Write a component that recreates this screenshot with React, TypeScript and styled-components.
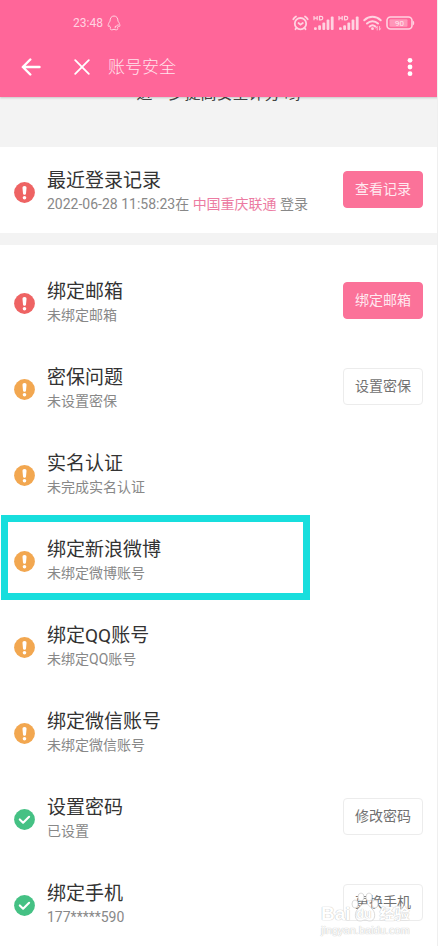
import React from "react";
import styled, { createGlobalStyle } from "styled-components";

const GlobalStyle = createGlobalStyle`
  *, *::before, *::after { box-sizing: border-box; }
  html, body { margin: 0; padding: 0; background: #fdfdfd; }
  body, button {
    font-family: Roboto, "Noto Sans CJK SC", sans-serif;
  }
`;

const Page = styled.div`
  position: relative;
  min-height: 100vh;
  overflow: hidden;
  background: #ffffff;
  border-right: 1px solid #efefef;
`;

const Header = styled.header`
  position: relative;
  background: #ff6699;
  color: #ffffff;
  margin-right: -1px;
  padding-bottom: 10px;
  box-shadow: 0 1px 2px rgba(0, 0, 0, 0.18);
`;

const StatusBar = styled.div`
  display: flex;
  align-items: center;
  justify-content: space-between;
  height: 46px;
  padding: 0 23px 0 73px;
  color: #ffd3e1;
`;

const StatusGroup = styled.div<{ $gap: number }>`
  display: flex;
  align-items: center;
  gap: ${(p) => p.$gap}px;
`;

const Clock = styled.time`
  font-size: 12px;
  line-height: 16px;
`;

const Toolbar = styled.div`
  display: flex;
  align-items: center;
  height: 41px;
  padding: 0 16px 0 19px;
`;

const IconButton = styled.button`
  display: flex;
  align-items: center;
  justify-content: center;
  width: 24px;
  height: 32px;
  padding: 0;
  border: 0;
  background: transparent;
  color: inherit;
  cursor: pointer;
`;

const CloseButton = styled(IconButton)`
  margin-left: 27px;
`;

const PageTitle = styled.h1`
  flex: 1;
  margin: 0 0 0 14px;
  font-size: 17px;
  line-height: 24px;
  font-weight: 300;
  color: #ffe3ec;
`;

const Banner = styled.section`
  height: 50px;
  overflow: hidden;
  display: flex;
  flex-direction: column;
  background: #f3f3f3;
`;

const BannerText = styled.p`
  margin: -15px 0 0;
  font-size: 16px;
  line-height: 24px;
  color: #444444;
  text-align: center;
`;

const Divider = styled.div`
  height: 12px;
  background: #f3f3f3;
`;

const List = styled.ul<{ $inset?: boolean }>`
  list-style: none;
  margin: 0;
  padding: ${(p) => (p.$inset ? "13px 0 0" : "0")};
`;

const Row = styled.li`
  position: relative;
  display: flex;
  align-items: flex-start;
  min-height: 86px;
  padding: 22px 14px 18px 14px;
`;

const StatusIcon = styled.svg`
  flex: none;
  width: 21px;
  height: 21px;
  margin-top: 13px;
`;

const RowText = styled.div`
  flex: 1;
  min-width: 0;
  margin-left: 12px;
`;

const RowTitle = styled.h2`
  margin: 0;
  font-size: 19px;
  line-height: 24px;
  font-weight: 400;
  color: #333333;
`;

const RowNote = styled.p`
  margin: 0;
  font-size: 14px;
  line-height: 22px;
  color: #888888;
  white-space: nowrap;
`;

const Place = styled.span`
  color: #ec7ba2;
`;

const ActionButton = styled.button<{ $primary?: boolean }>`
  flex: none;
  height: 37px;
  width: 80px;
  margin-top: 2px;
  padding: 0 0 2px;
  border: 1px solid ${(p) => (p.$primary ? "#fb7299" : "#ececec")};
  border-radius: 4px;
  background: ${(p) => (p.$primary ? "#fb7299" : "#ffffff")};
  color: ${(p) => (p.$primary ? "#ffe9f0" : "#717171")};
  font-size: 14px;
  line-height: 20px;
  cursor: pointer;
`;

const Highlight = styled.div`
  position: absolute;
  top: -1px;
  left: 1px;
  width: 309px;
  height: 85px;
  border: 7px solid #18dedd;
  pointer-events: none;
`;

const Watermark = styled.div`
  position: absolute;
  right: 22px;
  bottom: 10px;
  width: 94px;
  font-family: "Liberation Sans", "Noto Sans CJK SC", sans-serif;
  color: #ffffff;
  text-shadow: 0 0 1px #c4c4c4, 0 0 1px #c4c4c4;
  white-space: nowrap;
  pointer-events: none;
`;

const WatermarkBrand = styled.div`
  display: flex;
  align-items: center;
  font-size: 19px;
  line-height: 20px;
  font-weight: 700;
`;

const WatermarkName = styled.span`
  margin-left: 1px;
  font-size: 15px;
`;

const WatermarkUrl = styled.div`
  font-size: 11px;
  line-height: 12px;
`;

const Paw = styled.svg`
  position: absolute;
  left: 30px;
  top: -12px;
  width: 28px;
  height: 32px;
`;

const PawLabel = styled.span`
  position: relative;
  width: 28px;
  font-size: 12px;
  padding-left: 6px;
`;

type Level = "danger" | "warn" | "ok";

const levelColor: Record<Level, string> = {
  danger: "#ee6363",
  warn: "#f2a750",
  ok: "#45c184",
};

function LevelIcon({ level }: { level: Level }) {
  return (
    <StatusIcon viewBox="0 0 21 21" aria-hidden="true">
      <circle cx="10.5" cy="10.5" r="10.4" fill={levelColor[level]} />
      {level === "ok" ? (
        <path d="M5.8 10.4l3.3 3.3 6-5.9" fill="none" stroke="#fff" strokeWidth="2.1" strokeLinecap="round" strokeLinejoin="round" />
      ) : (
        <>
          <path d="M10.5 4.1c1.400 0 2.100.8 2 2l-.5 5.400c-.1.9-.7 1.300-1.500 1.300s-1.400-.4-1.500-1.300l-.5-5.400c-.1-1.200.6-2 2-2z" fill="#fff" />
          <circle cx="10.5" cy="15.7" r="1.800" fill="#fff" />
        </>
      )}
    </StatusIcon>
  );
}

function Penguin() {
  return (
    <svg width="14" height="16" viewBox="0 0 14 16" fill="none" stroke="currentColor" strokeWidth="1" strokeLinejoin="round" aria-hidden="true">
      <path d="M3 6.200C3 3 4.500 1 7 1s4 2 4 5.200c1 1.200 1.900 3 1.900 4.600 0 .9-.8.8-1.400 0-.2.900-.6 1.500-1.200 2.100 1 .5.800 1.700-.8 1.900-1.100.1-1.900-.2-2.500-.6-.6.4-1.400.7-2.500.6-1.600-.2-1.800-1.400-.8-1.900-.6-.6-1-1.200-1.200-2.100-.6.800-1.400.9-1.400 0C1.100 9.200 2 7.400 3 6.200z" />
      <path d="M8 11.500c1.500-.2 2.700-1 3.300-2.200M8.200 11.500v1.700" />
    </svg>
  );
}

function AlarmIcon() {
  return (
    <svg width="17" height="16" viewBox="0 0 17 16" fill="none" stroke="currentColor" strokeWidth="1.800" strokeLinecap="round" aria-hidden="true">
      <circle cx="8.500" cy="8.700" r="5.700" />
      <path d="M6.500 8l2 1.700L10.800 8M1.300 4.200A8 8 0 0 1 4 1.500M15.700 4.200A8 8 0 0 0 13 1.500M4.500 13l-1 1.200M12.500 13l1 1.200" />
    </svg>
  );
}

function SignalIcon() {
  return (
    <svg width="21" height="16" viewBox="0 0 21 16" fill="currentColor" aria-hidden="true">
      <path d="M1 1v4.200M4.200 1v4.200M1 3.100h3.200M6.500 1.300v3.600h1.500c2.400 0 2.400-3.600 0-3.600z" fill="none" stroke="currentColor" strokeWidth="1.200" />
      <rect x="1" y="12.200" width="2.800" height="2.800" rx="1" />
      <rect x="5.200" y="10.200" width="2.800" height="4.800" rx="1" />
      <rect x="9.400" y="7.500" width="2.800" height="7.500" rx="1" />
      <rect x="13.600" y="4.500" width="2.800" height="10.500" rx="1" />
      <rect x="17.800" y="1.500" width="2.800" height="13.500" rx="1" />
    </svg>
  );
}

function WifiIcon() {
  return (
    <svg width="19" height="16" viewBox="0 0 19 16" fill="none" stroke="currentColor" strokeWidth="2" strokeLinecap="round" aria-hidden="true">
      <path d="M1.300 5.300c4.700-4.600 11.700-4.600 16.400 0M4 8.500c3.200-3 7.800-3 11 0M6.700 11.500c1.700-1.500 3.900-1.500 5.600 0" />
      <circle cx="9.500" cy="13.700" r="1.400" fill="currentColor" stroke="none" />
      <path d="M14.200 15v-3.200M12.900 13l1.300-1.300M16.600 11.500v3.200M17.900 13.500l-1.300 1.300" strokeWidth="0.800" />
    </svg>
  );
}

function BatteryIcon() {
  return (
    <svg width="29" height="14" viewBox="0 0 29 14" aria-label="电量 90">
      <rect x="1" y="1" width="25" height="12" rx="3.500" fill="none" stroke="currentColor" strokeWidth="1.600" />
      <rect x="3.500" y="3.300" width="18" height="7.400" rx="1" fill="currentColor" opacity="0.450" />
      <path d="M27 4.800c1.600.2 1.600 4.200 0 4.400z" fill="currentColor" />
      <text x="13.500" y="10" textAnchor="middle" fontFamily="Roboto, sans-serif" fontSize="8" fill="#ffe6ee">90</text>
    </svg>
  );
}

interface Item {
  title: string;
  note: React.ReactNode;
  level: Level;
  action?: string;
  primary?: boolean;
  marked?: boolean;
}

const recent: Item[] = [
  {
    title: "最近登录记录",
    note: (
      <>
        2022-06-28 11:58:23在 <Place>中国重庆联通</Place> 登录
      </>
    ),
    level: "danger",
    action: "查看记录",
    primary: true,
  },
];

const items: Item[] = [
  { title: "绑定邮箱", note: "未绑定邮箱", level: "danger", action: "绑定邮箱", primary: true },
  { title: "密保问题", note: "未设置密保", level: "warn", action: "设置密保" },
  { title: "实名认证", note: "未完成实名认证", level: "warn" },
  { title: "绑定新浪微博", note: "未绑定微博账号", level: "warn", marked: true },
  { title: "绑定QQ账号", note: "未绑定QQ账号", level: "warn" },
  { title: "绑定微信账号", note: "未绑定微信账号", level: "warn" },
  { title: "设置密码", note: "已设置", level: "ok", action: "修改密码" },
  { title: "绑定手机", note: "177*****590", level: "ok", action: "更换手机" },
];

function SecurityRow({ item }: { item: Item }) {
  return (
    <Row>
      <LevelIcon level={item.level} />
      <RowText>
        <RowTitle>{item.title}</RowTitle>
        <RowNote>{item.note}</RowNote>
      </RowText>
      {item.action && (
        <ActionButton type="button" $primary={item.primary}>
          {item.action}
        </ActionButton>
      )}
      {item.marked && <Highlight />}
    </Row>
  );
}

export default function App() {
  return (
    <>
      <GlobalStyle />
      <Page>
        <Header>
          <StatusBar>
            <StatusGroup $gap={4}>
              <Clock>23:48</Clock>
              <Penguin />
            </StatusGroup>
            <StatusGroup $gap={4}>
              <AlarmIcon />
              <SignalIcon />
              <SignalIcon />
              <WifiIcon />
              <BatteryIcon />
            </StatusGroup>
          </StatusBar>
          <Toolbar>
            <IconButton type="button" aria-label="返回">
              <svg width="20" height="18" viewBox="0 0 20 18" fill="none" stroke="currentColor" strokeWidth="2.400" strokeLinecap="round" strokeLinejoin="round">
                <path d="M18.500 9H2M9.300 1.500L1.800 9l7.500 7.500" />
              </svg>
            </IconButton>
            <CloseButton type="button" aria-label="关闭">
              <svg width="16" height="16" viewBox="0 0 16 16" fill="none" stroke="currentColor" strokeWidth="1.800" strokeLinecap="round">
                <path d="M1.200 1.200l13.600 13.600M14.800 1.200L1.200 14.800" />
              </svg>
            </CloseButton>
            <PageTitle>账号安全</PageTitle>
            <IconButton type="button" aria-label="更多">
              <svg width="6" height="20" viewBox="0 0 6 20" fill="currentColor">
                <circle cx="3" cy="3.300" r="2.400" />
                <circle cx="3" cy="10" r="2.400" />
                <circle cx="3" cy="16.700" r="2.400" />
              </svg>
            </IconButton>
          </Toolbar>
        </Header>
        <main>
          <Banner>
            <BannerText>进一步提高安全评分 哟</BannerText>
          </Banner>
          <List>
            {recent.map((item) => (
              <SecurityRow key={item.title} item={item} />
            ))}
          </List>
          <Divider />
          <List $inset>
            {items.map((item) => (
              <SecurityRow key={item.title} item={item} />
            ))}
          </List>
        </main>
        <Watermark>
          <WatermarkBrand>
            <span>Bai</span>
            <Paw viewBox="0 0 28 32" fill="#fff" stroke="#d2d2d2" strokeWidth="0.800" aria-hidden="true">
              <ellipse cx="4" cy="12" rx="3" ry="4" />
              <ellipse cx="10" cy="5" rx="3" ry="4" />
              <ellipse cx="18" cy="5" rx="3" ry="4" />
              <ellipse cx="24" cy="12" rx="3" ry="4" />
              <path d="M14 12c4 0 5 3 8 6 3 4 2 11-3 11-3 0-3-1-5-1s-2 1-5 1c-5 0-6-7-3-11 3-3 4-6 8-6z" />
            </Paw>
            <PawLabel>du</PawLabel>
            <WatermarkName>经验</WatermarkName>
          </WatermarkBrand>
          <WatermarkUrl>jingyan.baidu.com</WatermarkUrl>
        </Watermark>
      </Page>
    </>
  );
}
